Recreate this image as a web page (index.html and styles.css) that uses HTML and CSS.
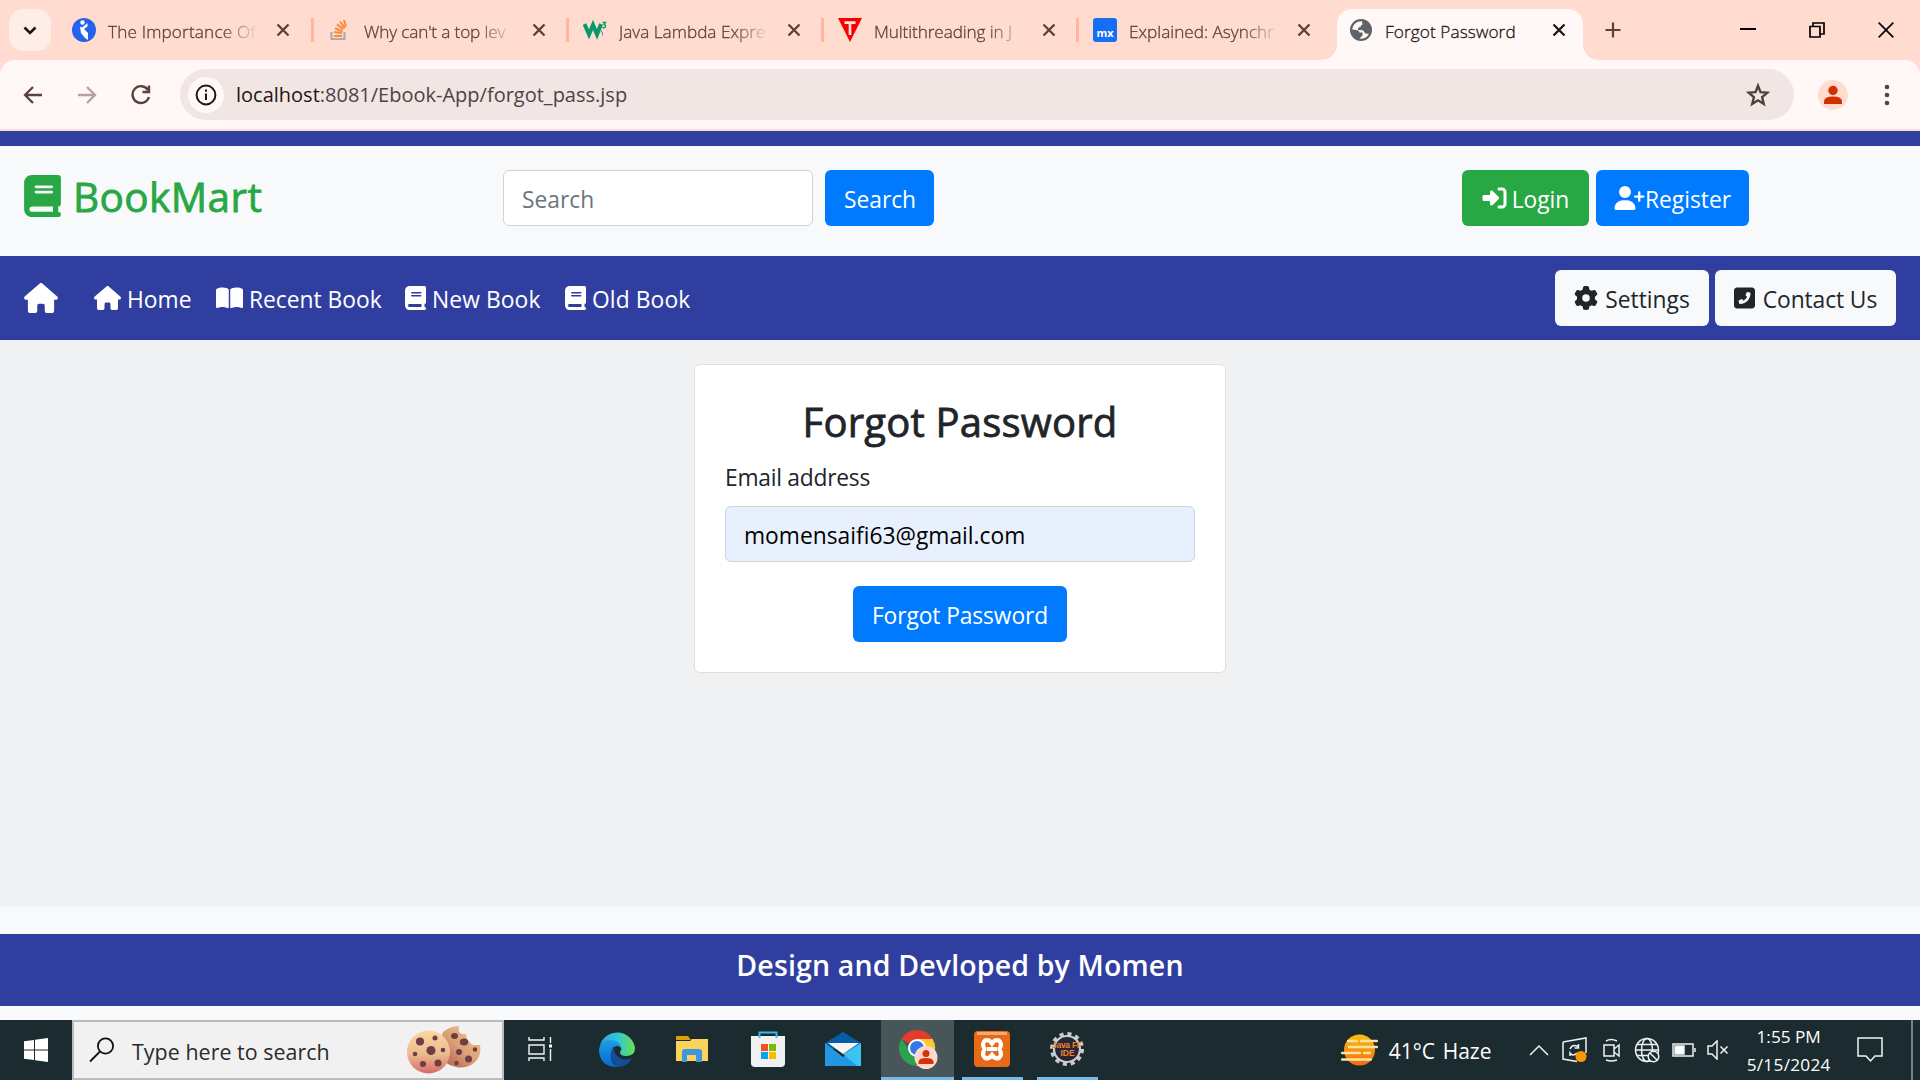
FILE: index.html
```html
<!DOCTYPE html>
<html lang="en">
<head>
<meta charset="utf-8">
<title>Forgot Password</title>
<link rel="stylesheet" href="styles.css">
</head>
<body>
<svg class="defs" width="0" height="0" aria-hidden="true">
  <symbol id="house" viewBox="0 0 576 512"><path d="M575.8 255.5c0 18-15 32.1-32 32.1h-32l.7 160.2c0 2.7-.2 5.4-.5 8.1V472c0 22.1-17.9 40-40 40H392c-22.1 0-40-17.9-40-40V384c0-17.7-14.3-32-32-32H256c-17.7 0-32 14.3-32 32v88c0 22.1-17.9 40-40 40H104c-22.1 0-40-17.9-40-40V287.6H32c-18 0-32-14-32-32.1c0-9 3-17 10-24L266.4 8c7-7 15-8 22-8s15 2 21 7L564.8 231.5c8 7 12 15 11 24z"/></symbol>
  <symbol id="book" viewBox="0 0 448 512"><path d="M96 0C43 0 0 43 0 96V416c0 53 43 96 96 96H384h32c17.7 0 32-14.3 32-32s-14.3-32-32-32V384c17.7 0 32-14.3 32-32V32c0-17.7-14.3-32-32-32H384 96zm0 384H352v64H96c-17.7 0-32-14.3-32-32s14.3-32 32-32zm32-240c0-8.800 7.200-16 16-16H336c8.800 0 16 7.200 16 16s-7.200 16-16 16H144c-8.800 0-16-7.200-16-16zm16 48H336c8.800 0 16 7.200 16 16s-7.200 16-16 16H144c-8.800 0-16-7.200-16-16s7.200-16 16-16z"/></symbol>
  <symbol id="open" viewBox="0 0 576 512"><path d="M249.600 471.500c10.800 3.800 22.400-4.100 22.400-15.500V78.600c0-4.200-1.600-8.400-5-11C247.400 52 202.400 32 144 32C93.500 32 46.300 45.300 18.100 56.100C6.800 60.500 0 71.700 0 83.800V454.100c0 11.900 12.800 20.200 24.100 16.500C55.600 460.100 105.500 448 144 448c33.900 0 79 14 105.600 23.500zm76.800 0C353 462 398.100 448 432 448c38.500 0 88.400 12.100 119.900 22.600c11.300 3.800 24.100-4.600 24.100-16.500V83.800c0-12.100-6.800-23.300-18.100-27.600C529.700 45.300 482.500 32 432 32c-58.400 0-103.400 20-123 35.600c-3.300 2.600-5 6.800-5 11V456c0 11.400 11.700 19.300 22.400 15.500z"/></symbol>
  <symbol id="cross" viewBox="0 0 14 14"><path d="M1.500 1.500l11 11M12.500 1.500l-11 11" fill="none" stroke="currentColor" stroke-width="2.300"/></symbol>
</svg>

<header class="tabstrip">
  <button class="tab-search"><svg width="14" height="9" viewBox="0 0 14 9"><path d="M1.500 1.500L7 7l5.500-5.500" fill="none" stroke="#1f1511" stroke-width="2.600"/></svg></button>
  <div class="tab first">
    <svg class="fav" viewBox="0 0 24 24"><circle cx="12" cy="12" r="12" fill="#2463eb"/><circle cx="10.500" cy="4.500" r="2.200" fill="#fff"/><path d="M8 8.500l2 1L15.500 5v3.500L12 11l4 4v7l-3-2-4-5z" fill="#fff"/></svg>
    <span class="tab-title t1">The Importance Of</span><svg class="x"><use href="#cross"/></svg>
  </div>
  <div class="tab">
    <svg class="fav" viewBox="0 0 24 24"><path d="M3.500 14v7h13v-7" fill="none" stroke="#b3aaa6" stroke-width="2.200"/><path d="M6 18h8M6 14l8 1M7 10.300l7.500 2.900M9 6.400l6.500 4.700M12 3.500l5 6.500M16 2l2 6.500" stroke="#f78a3c" stroke-width="2"/></svg>
    <span class="tab-title t2">Why can't a top lev</span><svg class="x"><use href="#cross"/></svg>
  </div>
  <div class="tab">
    <svg class="fav" viewBox="0 0 24 24"><path d="M1.500 6L6 16.500 10 7l4 9.500L18 6" fill="none" stroke="#06996b" stroke-width="4"/><path d="M16.500 8.500l3.500 7v3z" fill="#06996b"/><path d="M19.500 4.500h3L21 6.500q2 0 1.500 2t-3 .8" fill="none" stroke="#06996b" stroke-width="1.300"/></svg>
    <span class="tab-title t3">Java Lambda Expre</span><svg class="x"><use href="#cross"/></svg>
  </div>
  <div class="tab">
    <svg class="fav" viewBox="0 0 24 24"><path d="M0 0h24L12 24z" fill="#f80000"/><path d="M6.500 4.700h11M12 4v13" stroke="#ffe1df" stroke-width="2.700"/></svg>
    <span class="tab-title t4">Multithreading in J</span><svg class="x"><use href="#cross"/></svg>
  </div>
  <div class="tab last">
    <span class="fav mx">mx</span>
    <span class="tab-title t5">Explained: Asynchr</span><svg class="x"><use href="#cross"/></svg>
  </div>
  <div class="tab active">
    <svg class="fav globe" viewBox="0 0 22 22"><circle cx="11" cy="11" r="11" fill="#5f6368"/><path d="M12 2.200C7 2 2.500 5.500 2.300 10.500L6 11q3 0 3.500 2.500h3v3l-3 3q7 1 9.500-5-3 .8-4.500-1-.5-2.500-3-2.500H8q-.5-3 2.500-3 0-2 2-2.500z" fill="#fff8f6"/></svg>
    <span class="tab-title t6">Forgot Password</span><svg class="x"><use href="#cross"/></svg>
  </div>
  <svg class="newtab" viewBox="0 0 16 16"><path d="M8 .5v15M.5 8h15" stroke="#5a413a" stroke-width="2.200"/></svg>
  <div class="window-controls">
    <svg viewBox="0 0 16 16"><path d="M0 7h16" stroke="#000" stroke-width="2"/></svg>
    <svg viewBox="0 0 16 16"><path d="M1 4.500h10v10.500H1zM4 4.500V1h11v11h-4" fill="none" stroke="#000" stroke-width="1.700"/></svg>
    <svg viewBox="0 0 16 16"><path d="M.7.7l14.600 14.600M15.300.7L.7 15.300" stroke="#000" stroke-width="1.700"/></svg>
  </div>
</header>

<div class="toolbar">
  <div class="nav-buttons">
    <svg viewBox="0 0 20 20"><path d="M19 10H2.500M10 2l-8 8 8 8" fill="none" stroke="#5a413a" stroke-width="2.300"/></svg>
    <svg viewBox="0 0 20 20"><path d="M1 10h16.500M10 2l8 8-8 8" fill="none" stroke="#b3a29d" stroke-width="2.300"/></svg>
    <svg viewBox="0 0 20 20"><path d="M17 5A8.400 8.400 0 1 0 18 12M18 .5V7h-6.500" fill="none" stroke="#5a413a" stroke-width="2.400"/></svg>
  </div>
  <div class="omnibox">
    <span class="info"><svg viewBox="0 0 22 22"><circle cx="11" cy="11" r="9.400" fill="none" stroke="#1f1511" stroke-width="2"/><path d="M11 9.500v6.500M11 5.500v2.200" stroke="#1f1511" stroke-width="2"/></svg></span>
    <span class="url"><b>localhost</b>:8081/Ebook-App/forgot_pass.jsp</span>
    <svg class="star" viewBox="0 0 24 24"><path d="M12 3.500l2.300 5.800 6.300.5-4.800 4.200 1.500 6.300-5.300-3.400-5.300 3.400 1.500-6.300-4.800-4.200 6.300-.5z" fill="none" stroke="#4d3f3b" stroke-width="2.200"/></svg>
  </div>
  <span class="profile"><svg viewBox="0 0 30 30"><circle cx="15" cy="10.500" r="4.700"/><path d="M6 24v-2.500Q6 16.500 15 16.500t9 5V24z"/></svg></span>
  <svg class="dots" viewBox="0 0 6 22"><circle cx="3" cy="3" r="2.300"/><circle cx="3" cy="11" r="2.300"/><circle cx="3" cy="19" r="2.300"/></svg>
</div>

<main class="page">
  <div class="topline"></div>
  <section class="brandbar">
    <h3 class="brand"><svg><use href="#book"/></svg><span>BookMart</span></h3>
    <form class="search"><span class="input placeholder">Search</span><span class="btn primary w-search">Search</span></form>
    <div class="account">
      <a class="btn success"><svg viewBox="0 0 512 512"><path d="M217.900 105.900L340.700 228.700c7.200 7.200 11.300 17.100 11.300 27.300s-4.100 20.100-11.300 27.300L217.900 406.100c-6.400 6.400-15 9.900-24 9.900c-18.700 0-33.900-15.200-33.900-33.900V320H32c-17.700 0-32-14.300-32-32v-64c0-17.700 14.300-32 32-32h128v-62.100c0-18.700 15.200-33.900 33.900-33.900c9 0 17.600 3.600 24 9.900zM352 416h64c17.700 0 32-14.300 32-32V128c0-17.700-14.300-32-32-32h-64c-17.700 0-32-14.300-32-32s14.300-32 32-32h64c53 0 96 43 96 96v256c0 53-43 96-96 96h-64c-17.700 0-32-14.300-32-32s14.300-32 32-32z"/></svg><span>Login</span></a>
      <a class="btn primary register"><svg viewBox="0 0 640 512"><path d="M96 128a128 128 0 1 1 256 0A128 128 0 1 1 96 128zM0 482.300C0 383.800 79.800 304 178.300 304h91.400C368.200 304 448 383.800 448 482.300c0 16.400-13.300 29.700-29.700 29.700H29.700C13.300 512 0 498.700 0 482.300zM504 312V248H440c-13.300 0-24-10.700-24-24s10.700-24 24-24h64V136c0-13.300 10.700-24 24-24s24 10.700 24 24v64h64c13.300 0 24 10.700 24 24s-10.700 24-24 24H552v64c0 13.300-10.700 24-24 24s-24-10.700-24-24z"/></svg><span>Register</span></a>
    </div>
  </section>
  <nav class="navbar">
    <svg class="home-brand"><use href="#house"/></svg>
    <a class="link l1"><svg class="w27"><use href="#house"/></svg><span>Home</span></a>
    <a class="link l2"><svg class="w27"><use href="#open"/></svg><span>Recent Book</span></a>
    <a class="link l3"><svg class="w21"><use href="#book"/></svg><span>New Book</span></a>
    <a class="link l4"><svg class="w21"><use href="#book"/></svg><span>Old Book</span></a>
    <a class="btn light settings"><svg viewBox="0 0 512 512"><path d="M495.900 166.600c3.200 8.700 .5 18.400-6.400 24.600l-43.300 39.400c1.100 8.300 1.700 16.800 1.700 25.400s-.6 17.100-1.700 25.400l43.300 39.400c6.900 6.200 9.600 15.900 6.400 24.600c-4.400 11.900-9.700 23.300-15.800 34.300l-4.700 8.100c-6.600 11-14 21.400-22.100 31.200c-5.900 7.200-15.700 9.600-24.500 6.800l-55.700-17.700c-13.400 10.300-28.200 18.900-44 25.400l-12.500 57.100c-2 9.100-9 16.300-18.200 17.800c-13.800 2.300-28 3.500-42.500 3.500s-28.700-1.200-42.500-3.500c-9.200-1.500-16.200-8.700-18.200-17.800l-12.500-57.100c-15.800-6.500-30.600-15.100-44-25.400L83.100 425.900c-8.800 2.800-18.600 .3-24.500-6.800c-8.100-9.800-15.500-20.200-22.100-31.200l-4.700-8.100c-6.100-11-11.400-22.400-15.800-34.300c-3.200-8.700-.5-18.400 6.400-24.600l43.300-39.400C64.600 273.100 64 264.600 64 256s.6-17.100 1.700-25.400L22.400 191.200c-6.900-6.200-9.600-15.900-6.400-24.600c4.400-11.900 9.700-23.300 15.800-34.300l4.700-8.100c6.600-11 14-21.400 22.100-31.200c5.900-7.200 15.700-9.600 24.500-6.800l55.700 17.700c13.400-10.300 28.200-18.900 44-25.400l12.500-57.100c2-9.100 9-16.300 18.200-17.800C227.300 1.200 241.500 0 256 0s28.700 1.200 42.500 3.500c9.200 1.500 16.200 8.700 18.200 17.800l12.500 57.100c15.800 6.500 30.600 15.100 44 25.400l55.700-17.700c8.800-2.800 18.600-.3 24.500 6.800c8.100 9.800 15.500 20.200 22.100 31.200l4.700 8.100c6.100 11 11.400 22.400 15.800 34.300zM256 336a80 80 0 1 0 0-160 80 80 0 1 0 0 160z"/></svg><span>Settings</span></a>
    <a class="btn light contact"><svg viewBox="0 0 448 512"><path transform="translate(448 0) scale(-1 1)" d="M64 32C28.700 32 0 60.700 0 96V416c0 35.300 28.700 64 64 64H384c35.300 0 64-28.700 64-64V96c0-35.300-28.700-64-64-64H64zm90.700 96.700c9.700-2.600 19.900 2.300 23.700 11.600l20 48c3.400 8.200 1 17.600-5.800 23.200L168 231.700c16.600 35.200 45.100 63.700 80.300 80.300l20.200-24.700c5.600-6.800 15-9.200 23.200-5.800l48 20c9.300 3.900 14.200 14 11.600 23.700l-12 44C336.900 378 329 384 320 384C196.300 384 96 283.700 96 160c0-9 6-16.900 14.700-19.300l44-12z"/></svg><span>Contact Us</span></a>
  </nav>
  <section class="content">
    <form class="card">
      <h3 class="card-title">Forgot Password</h3>
      <label class="label">Email address</label>
      <span class="input email">momensaifi63@gmail.com</span>
      <span class="btn primary submit">Forgot Password</span>
    </form>
  </section>
  <footer class="footer"><h5>Design and Devloped by Momen</h5></footer>
</main>

<div class="taskbar">
  <div class="start"><svg width="24" height="24" viewBox="0 0 24 24"><path d="M0 3.300L10 2v9.500H0zM11 1.800L24 0v11.500H11zM0 12.500h10V22L0 20.700zM11 12.500h13V24l-13-1.800z" fill="#fff"/></svg></div>
  <div class="tasksearch">
    <svg width="26" height="26" viewBox="0 0 26 26"><circle cx="16.500" cy="9" r="7.600" fill="none" stroke="#111" stroke-width="1.800"/><path d="M11 14.500L1 24.500" stroke="#111" stroke-width="1.800"/></svg>
    <span>Type here to search</span>
    <svg class="cookies" viewBox="0 0 74 48">
      <defs><linearGradient id="ck" x1="0" y1="0" x2="0" y2="1"><stop offset="0" stop-color="#fbd6a2"/><stop offset=".55" stop-color="#ecbb90"/><stop offset="1" stop-color="#d9696a"/></linearGradient><linearGradient id="ck2" x1="1" y1="0" x2="0" y2="1"><stop offset="0" stop-color="#f3c795"/><stop offset=".5" stop-color="#dda078"/><stop offset="1" stop-color="#a6504c"/></linearGradient></defs>
      <path d="M36 6Q43 0 52 0q-1 4 1 7 3 2 6 1 0 5 3 7 2 4 5 4 2 0 6 0 2 11-6 18-8 6-18 4-14-3-18-16z" fill="url(#ck2)"/>
      <circle cx="21.500" cy="26" r="21.500" fill="url(#ck)"/>
      <g fill="#6f3e42"><circle cx="13" cy="15.500" r="4"/><circle cx="28" cy="12" r="2.500"/><circle cx="24" cy="24.500" r="4.500"/><circle cx="36" cy="24" r="2.300"/><circle cx="8" cy="28" r="2.300"/><circle cx="16" cy="38" r="3"/><circle cx="31" cy="37" r="3.500"/><ellipse cx="47.500" cy="10" rx="3.500" ry="3"/><ellipse cx="57" cy="16" rx="4.200" ry="3.500"/><circle cx="52" cy="26" r="3"/><circle cx="61.500" cy="33" r="3.500"/><circle cx="68" cy="23.500" r="2.300"/><circle cx="49.500" cy="37" r="2.200"/></g>
    </svg>
  </div>
  <div class="apps">
    <span class="app"><svg width="24" height="26" viewBox="0 0 24 26"><path d="M1 1v3h15V1M1 9h15v9H1zM1 25v-3h15v3M22.500 1v6M22.500 13v12" fill="none" stroke="#f2f4f4" stroke-width="1.400"/><path d="M21 8.500h3v3h-3z" fill="#fff"/></svg></span>
    <span class="app"><svg width="36" height="36" viewBox="0 0 36 36"><defs><linearGradient id="e1"><stop offset="0" stop-color="#2aa4dd"/><stop offset=".5" stop-color="#32c5d8"/><stop offset="1" stop-color="#68e24d"/></linearGradient><linearGradient id="e2" x1="0" y1="0" x2="0" y2="1"><stop offset="0" stop-color="#1ba0e4"/><stop offset="1" stop-color="#0869cb"/></linearGradient></defs><path d="M1 14A18 18 0 0 1 36 17q0 8-9 8-6 0-6-4 2-2 1-5-5-8-21-2z" fill="url(#e1)"/><path d="M0 18Q2 8 12 9q9 0 10 8-4-4-8 0-6 14 5 19Q0 36 0 18z" fill="url(#e2)"/><path d="M15 15q-8 11 3 21 11 0 15-9-7 3-12 0-7-4-6-12z" fill="#164d97"/></svg></span>
    <span class="app"><svg width="32" height="28" viewBox="0 0 32 28"><path d="M0 2q0-1 1-1h11l3 4H0z" fill="#de9c0c"/><path d="M0 6h14l2-2h16v22H0z" fill="#fbd35c"/><path d="M6 26V17q0-3 3-3h14q3 0 3 3v10h-6v-7h-9v7H6z" fill="#3e96dc"/></svg></span>
    <span class="app"><svg width="36" height="36" viewBox="0 0 36 36"><path d="M1 5h34v27q0 4-4 4H5q-4 0-4-4z" fill="#f0f1f2"/><path d="M9.500 7V1.500h17V7" fill="none" stroke="#35b9ec" stroke-width="2"/><path d="M11 13h7v7h-7z" fill="#f25022"/><path d="M19 13h7v7h-7z" fill="#7fba00"/><path d="M11 21h7v7h-7z" fill="#00a4ef"/><path d="M19 21h7v7h-7z" fill="#ffb900"/></svg></span>
    <span class="app"><svg width="36" height="34" viewBox="0 0 36 34"><path d="M0 11L18 0l18 11v6H0z" fill="#085ca7"/><path d="M0 11l18 14L36 11v23H0z" fill="#2298e2"/><path d="M36 11L18 22l14 12h4z" fill="#3bc3f1"/><path d="M3 11h31L18 22z" fill="#f4f5f6"/></svg></span>
    <span class="app on chrome"><svg width="40" height="40" viewBox="0 0 40 40"><path d="M18 18L2.400 9A18 18 0 0 1 33.600 9z" fill="#e33b2e"/><path d="M18 18h-9L2.400 9a18 18 0 0 0 14 27z" fill="#2ba24c"/><path d="M18 9h15.600A18 18 0 0 1 17 36l9-14z" fill="#fcc934"/><circle cx="18" cy="18" r="9" fill="#fff"/><circle cx="18" cy="18" r="7" fill="#3378e8"/><circle cx="27" cy="27.500" r="11.500" fill="#ffd9d0"/><circle cx="27" cy="23.500" r="3.500" fill="#d33307"/><path d="M19.500 34v-2q0-4 7.500-4t7.500 4v2z" fill="#d33307"/></svg></span>
    <span class="app run"><svg width="36" height="36" viewBox="0 0 36 36"><rect width="36" height="36" rx="4" fill="#e96a15"/><path d="M3 1h30v3H3z" fill="#f6a873"/><path d="M11 9.500q4-1.500 7 3 3-4.500 7-3 3.500 3 .5 8.500 3 6-.5 9-4 1.500-7-3-3 4.500-7 3-3.500-3-.5-9-3-5.500.5-8.500zM13 18h10" fill="none" stroke="#fff" stroke-width="4.200"/></svg></span>
    <span class="app run"><svg width="34" height="34" viewBox="0 0 34 34"><circle cx="17" cy="17" r="15" fill="none" stroke="#c9cdce" stroke-width="4" stroke-dasharray="4 3.850"/><circle cx="17" cy="17" r="13" fill="#2a2534" stroke="#c9cdce" stroke-width="2.200"/><g fill="#ee8331" font-family="Liberation Sans" font-size="8.500" font-weight="700" text-anchor="middle"><text x="17" y="16" textLength="30">Java FF</text><text x="17.500" y="24">IDE</text></g></svg></span>
  </div>
  <div class="weather">
    <svg width="37" height="32" viewBox="0 0 37 32"><defs><linearGradient id="sun" x1="0" y1="0" x2="0" y2="1"><stop offset="0" stop-color="#fdc10c"/><stop offset="1" stop-color="#ed6d10"/></linearGradient></defs><circle cx="18.500" cy="16" r="15.500" fill="url(#sun)"/><path d="M7 7h9M20 7h16M8 13h28M1 19h18M23 19h6M1 25.500h29" stroke="#fde1a4" stroke-width="2.300" stroke-linecap="round"/></svg>
    <span class="temp">41°C</span><span class="haze">Haze</span>
  </div>
  <div class="tray">
    <svg class="i1" width="20" height="12" viewBox="0 0 20 12"><path d="M1 11l9-9 9 9"/></svg>
    <svg class="i2" width="26" height="26" viewBox="0 0 26 26"><path d="M1 5l23-4v15M1 5v17l14 2.500M8 12q2-5 7-3l1.500 1.500M16.500 7v4h-4M15 16q-4 4-7 0v3"/><circle cx="19" cy="19.500" r="5.500" class="dot"/></svg>
    <svg class="i3" width="18" height="24" viewBox="0 0 18 24"><path d="M1 7h10v11H1zM11 11l5-4v11l-5-4M3 3q5-3 11 0M3 22q5 2 11 0"/></svg>
    <svg class="i4" width="26" height="26" viewBox="0 0 26 26"><circle cx="13" cy="13" r="11.500"/><ellipse cx="13" cy="13" rx="5.500" ry="11.500"/><path d="M3 7.500h20M1.500 13h23M3 18.500h13"/><circle cx="19.500" cy="19.500" r="5.300" class="ban"/><path d="M16 16l7 7"/></svg>
    <svg class="i5" width="24" height="14" viewBox="0 0 24 14"><path d="M1 1h20v12H1zM23 5v4"/><path d="M3 3h9v8H3z" fill="#fff"/></svg>
    <svg class="i6" width="22" height="20" viewBox="0 0 22 20"><path d="M1 6h4l5-5v18l-5-5H1zM13.500 6.500l7 7M20.500 6.500l-7 7"/></svg>
  </div>
  <div class="clock"><span class="time">1:55 PM</span><span class="date">5/15/2024</span></div>
  <svg class="notice" width="26" height="26" viewBox="0 0 26 26"><path d="M1 1h24v18h-7l-4.500 5L9 19H1z" fill="none" stroke="#f2f4f4" stroke-width="1.500"/></svg>
  <span class="peek"></span>
</div>
</body>
</html>
```
FILE: styles.css
```css
* { box-sizing: border-box; }
body {
  margin: 0;
  width: 1920px;
  height: 1080px;
  overflow: hidden;
  display: flex;
  flex-direction: column;
  background: #ffdbd0;
  font-family: "Open Sans", "Noto Sans", sans-serif;
  font-size: 22.8px;
  color: #212529;
}
h3, h5 { margin: 0; font-weight: 500; }
svg { display: block; flex: none; }
span { white-space: nowrap; }
.defs { position: absolute; }

/* browser tab strip */
.tabstrip { height: 60px; flex: none; display: flex; align-items: center; padding-left: 9px; }
.tab-search { width: 42px; height: 42px; border: 0; border-radius: 14px; background: #ffede8; padding: 0; display: grid; place-items: center; margin-right: 5px; }
.tab { width: 255px; height: 24px; display: flex; align-items: center; padding-left: 14px; border-right: 3px solid #ffb59f; font-size: 17.2px; color: #5a413a; }
.tab.first { width: 258px; padding-left: 16px; }
.tab.last { border-color: transparent; }
.fav { width: 24px; height: 24px; }
.tab-title { width: 150px; margin-left: 12px; padding-top: 3px; line-height: 26px; font-weight: 300; -webkit-text-stroke: .3px currentColor; mask-image: linear-gradient(to right, #000 114px, transparent 150px); }
.t1 { letter-spacing: .15px; }
.t2 { letter-spacing: -.15px; }
.t4 { letter-spacing: -.1px; }
.x { width: 14px; height: 14px; margin-left: 18px; color: #5a413a; }
.mx { border-radius: 3px; background: #156ff5; color: #fff; font-size: 11px; font-weight: 700; line-height: 29px; text-align: center; }
.tab.active { position: relative; width: 246px; height: 51px; align-self: flex-end; margin-left: 3px; padding-left: 13px; border: 0; border-radius: 15px 15px 0 0; background: #fff8f6; color: #1f1511; padding-bottom: 9px; }
.tab.active::before, .tab.active::after { content: ""; position: absolute; bottom: 0; width: 15px; height: 15px; }
.tab.active::before { left: -15px; background: radial-gradient(circle at 0 0, transparent 14.5px, #fff8f6 15px); }
.tab.active::after { right: -15px; background: radial-gradient(circle at 100% 0, transparent 14.5px, #fff8f6 15px); }
.active .fav { width: 22px; height: 22px; }
.active .tab-title { mask-image: none; margin-left: 13px; letter-spacing: .1px; }
.active .x { color: #1f1511; margin-left: 17px; }
.newtab { width: 16px; height: 16px; margin-left: 22px; }
.window-controls { display: flex; gap: 53px; margin-left: auto; margin-right: 26px; }
.window-controls svg { width: 16px; height: 16px; }

/* address bar */
.toolbar { height: 71px; flex: none; display: flex; align-items: center; background: #fff8f6; border-bottom: 2px solid #f7dcd5; border-radius: 15px 15px 0 0; padding-left: 23px; }
.nav-buttons { display: flex; gap: 34px; width: 157px; }
.nav-buttons svg { width: 20px; height: 20px; }
.omnibox { width: 1614px; height: 51px; border-radius: 26px; background: #f2e6e5; display: flex; align-items: center; padding: 0 23px 0 8px; }
.info { width: 36px; height: 36px; border-radius: 50%; background: #fff8f6; display: grid; place-items: center; }
.info svg { width: 22px; height: 22px; }
.url { margin-left: 12px; font-size: 20px; color: #4d4344; }
.url b { font-weight: 400; color: #1f1511; }
.star { width: 26px; height: 26px; margin-left: auto; }
.profile { width: 30px; height: 30px; border-radius: 50%; background: #ffdbd0; margin-left: 24px; }
.profile svg { fill: #d33000; }
.dots { width: 6px; height: 22px; margin-left: 36px; fill: #5a413a; }

/* page */
.page { height: 889px; flex: none; background: #f8f9fb; }
.topline { height: 15px; background: #303f9f; }
.brandbar { height: 110px; display: flex; padding: 24px; }
.brand { width: 479px; height: 52px; display: flex; align-items: center; gap: 12px; color: #28a745; font-size: 40.5px; letter-spacing: .4px; -webkit-text-stroke: .8px currentColor; }
.brand svg { width: 37px; height: 42px; fill: #28a745; }
.search { display: flex; gap: 12px; }
.input { display: flex; align-items: center; width: 310px; height: 56px; padding: 2px 18px 0; border: 1px solid #ced4da; border-radius: 6px; background: #fff; }
.placeholder { color: #6c757d; }
.btn { height: 56px; border-radius: 6px; display: flex; align-items: center; justify-content: center; color: #fff; }
.btn:not(:has(svg)), .btn span { padding-top: 2px; }
.btn svg { height: 24px; fill: currentColor; }
.primary { background: #007bff; }
.success { background: #28a745; width: 127px; gap: 5px; }
.success svg { width: 25px; }
.light { background: #f8f9fb; color: #212529; }
.w-search { width: 109px; padding-left: 1px; }
.account { display: flex; gap: 7px; margin-left: 528px; }
.register { width: 153px; }
.register svg { width: 31px; }
.navbar { height: 84px; display: flex; align-items: center; padding: 0 24px; background: #303f9f; color: #fff; }
.home-brand { width: 34px; height: 30px; margin-right: 36px; fill: #fff; }
.link { display: flex; align-items: center; gap: 6px; }
.link svg { height: 24px; fill: #fff; }
.link span { padding-top: 2px; }
.w27 { width: 27px; }
.w21 { width: 21px; }
.l1 { width: 122px; }
.l2 { width: 189px; }
.l3 { width: 160px; letter-spacing: .1px; }
.l4 { width: 140px; letter-spacing: .1px; }
.settings { width: 154px; margin-left: auto; margin-right: 6px; gap: 7px; }
.settings svg { width: 24px; }
.contact { width: 181px; gap: 8px; letter-spacing: -.1px; }
.contact svg { width: 21px; }
.content { height: 567px; padding-top: 24px; background: #f0f1f3; }
.card { width: 532px; height: 309px; margin: 0 auto; padding: 28px 30px 0; display: flex; flex-direction: column; background: #fff; border: 1px solid #dfdfdf; border-radius: 6px; }
.card-title { height: 58px; line-height: 58px; text-align: center; font-size: 40px; letter-spacing: .2px; -webkit-text-stroke: .8px currentColor; }
.label { height: 36px; line-height: 36px; margin: 9px 0 10px; letter-spacing: -.25px; }
.email { width: 470px; background: #e8f0fe; color: #000; }
.submit { width: 214px; margin: 24px auto 0; letter-spacing: -.1px; }
.footer { margin-top: 27px; height: 72px; background: #303f9f; color: #fff; text-align: center; }
.footer h5 { font-size: 28.5px; line-height: 63px; font-weight: 600; letter-spacing: .15px; }

/* taskbar */
.taskbar { height: 60px; flex: none; display: flex; align-items: center; background: #1b2b30; color: #fff; }
.start { width: 72px; padding-left: 24px; }
.tasksearch { width: 432px; height: 60px; display: flex; align-items: center; background: #f1f1f1; border: 2px solid #bcbcbc; color: #2b2b2b; padding: 0 21px 0 15px; font-size: 21.4px; letter-spacing: .05px; }
.tasksearch span { margin-left: 17px; padding-top: 2px; }
.cookies { width: 74px; height: 48px; margin-left: auto; }
.apps { display: flex; height: 60px; }
.app { width: 75.3px; display: grid; place-items: center; border-bottom: 3px solid transparent; }
.app:nth-child(1) { width: 75.5px; padding-right: 3px; }
.app.on { background: #48565a; width: 73px; border-color: #76b9ed; }
.chrome svg { margin: 3px 0 0 4px; }
.app.run { width: 61px; margin-left: 8px; border-color: #76b9ed; }
.app.run + .run { margin-left: 14px; }
.weather { display: flex; align-items: center; margin-left: 243px; font-size: 21px; }
.temp { margin-left: 11px; width: 54px; padding-top: 2px; }
.haze { width: 86px; padding-top: 2px; }
.tray { display: flex; align-items: center; width: 218px; }
.tray svg { fill: none; stroke: #eef1f2; stroke-width: 1.5; }
.tray .dot { fill: #ff9800; stroke: none; }
.tray .ban { fill: #1b2b30; }
.i2 { margin-left: 13px; }
.i3 { margin-left: 15px; }
.i4 { margin-left: 13px; }
.i5 { margin-left: 12px; }
.i6 { margin-left: 11px; }
.clock { width: 84px; display: flex; flex-direction: column; align-items: center; font-size: 17.2px; line-height: 28px; padding-top: 1px; }
.date { letter-spacing: .3px; }
.notice { margin-left: 26px; }
.peek { width: 2px; height: 60px; margin-left: 28px; background: #77838a; }
```
